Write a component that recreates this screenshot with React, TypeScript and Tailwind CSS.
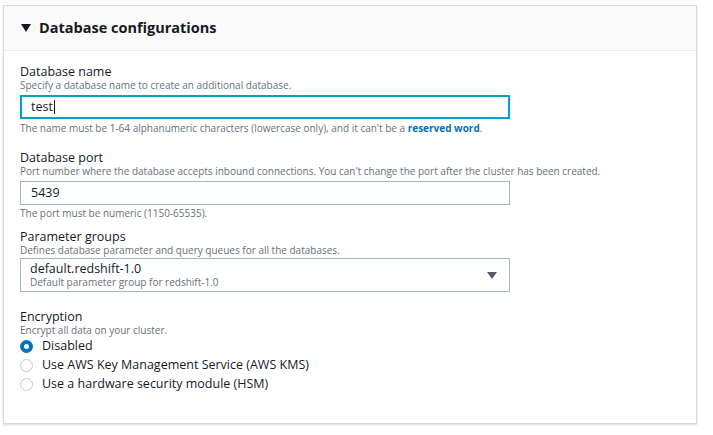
export default function App() {
  const Radio = ({ on, label }: { on?: boolean; label: string }) => (
    <label className="flex h-[19px] items-center gap-[9px] text-[12.5px] text-[#16191f]">
      {on ? (
        <span className="h-[13px] w-[13px] rounded-full border-[4px] border-[#0073bb] bg-white" />
      ) : (
        <span className="h-[13px] w-[13px] rounded-full border border-[#c6c6cd] bg-white" />
      )}
      {label}
    </label>
  );
  return (
    <div className="h-[435px] w-[713px] bg-white pl-[3px] pt-[5px] text-[#16191f]" style={{ fontFamily: '"Open Sans", "Noto Sans", sans-serif' }}>
      <div className="h-[419px] w-[694px] border border-[#d5dbdb] shadow-[0_1px_2px_rgba(0,0,0,0.15)]">
        <div className="flex h-[45px] items-center gap-[8px] border-b border-[#eaeded] bg-[#fafafa] px-[17px]">
          <svg width="10" height="8" viewBox="0 0 10 8"><path d="M0 0h10L5 8z" fill="#16191f" /></svg>
          <span className="text-[14.5px] font-bold">Database configurations</span>
        </div>
        <div className="px-[16px] pt-[13px]">
          <div className="text-[12.5px] leading-[15px]">Database name</div>
          <div className="text-[10px] leading-[13px] text-[#687078]">Specify a database name to create an additional database.</div>
          <div className="mt-[3px] flex h-[24px] w-[490px] items-center border-2 border-[#00a1c9] px-[9px] text-[12.5px]">test<span className="ml-px h-[14px] w-px bg-[#16191f]" /></div>
          <div className="mt-[3px] text-[10px] leading-[13px] text-[#687078]">The name must be 1-64 alphanumeric characters (lowercase only), and it can't be a <span className="font-bold text-[#0073bb]">reserved word</span>.</div>

          <div className="mt-[15px] text-[12.5px] leading-[15px]">Database port</div>
          <div className="text-[10px] leading-[13px] text-[#687078]">Port number where the database accepts inbound connections. You can't change the port after the cluster has been created.</div>
          <div className="mt-[3px] flex h-[24px] w-[490px] items-center border border-[#aab7b8] px-[10px] text-[12.5px]">5439</div>
          <div className="mt-[2px] text-[10px] leading-[13px] text-[#687078]">The port must be numeric (1150-65535).</div>

          <div className="mt-[9px] text-[12.5px] leading-[15px]">Parameter groups</div>
          <div className="text-[10px] leading-[13px] text-[#687078]">Defines database parameter and query queues for all the databases.</div>
          <div className="mt-[1px] flex h-[34px] w-[490px] items-center justify-between border border-[#aab7b8] pl-[9px] pr-[12px]">
            <div>
              <div className="text-[12.5px] leading-[15px]">default.redshift-1.0</div>
              <div className="text-[10px] leading-[13px] text-[#687078]">Default parameter group for redshift-1.0</div>
            </div>
            <svg width="10" height="7" viewBox="0 0 10 7"><path d="M0 0h10L5 7z" fill="#545b64" /></svg>
          </div>

          <div className="mt-[17px] text-[12.5px] leading-[15px]">Encryption</div>
          <div className="text-[10px] leading-[13px] text-[#687078]">Encrypt all data on your cluster.</div>
          <div className="flex flex-col">
            <Radio on label="Disabled" />
            <Radio label="Use AWS Key Management Service (AWS KMS)" />
            <Radio label="Use a hardware security module (HSM)" />
          </div>
        </div>
      </div>
    </div>
  );
}
